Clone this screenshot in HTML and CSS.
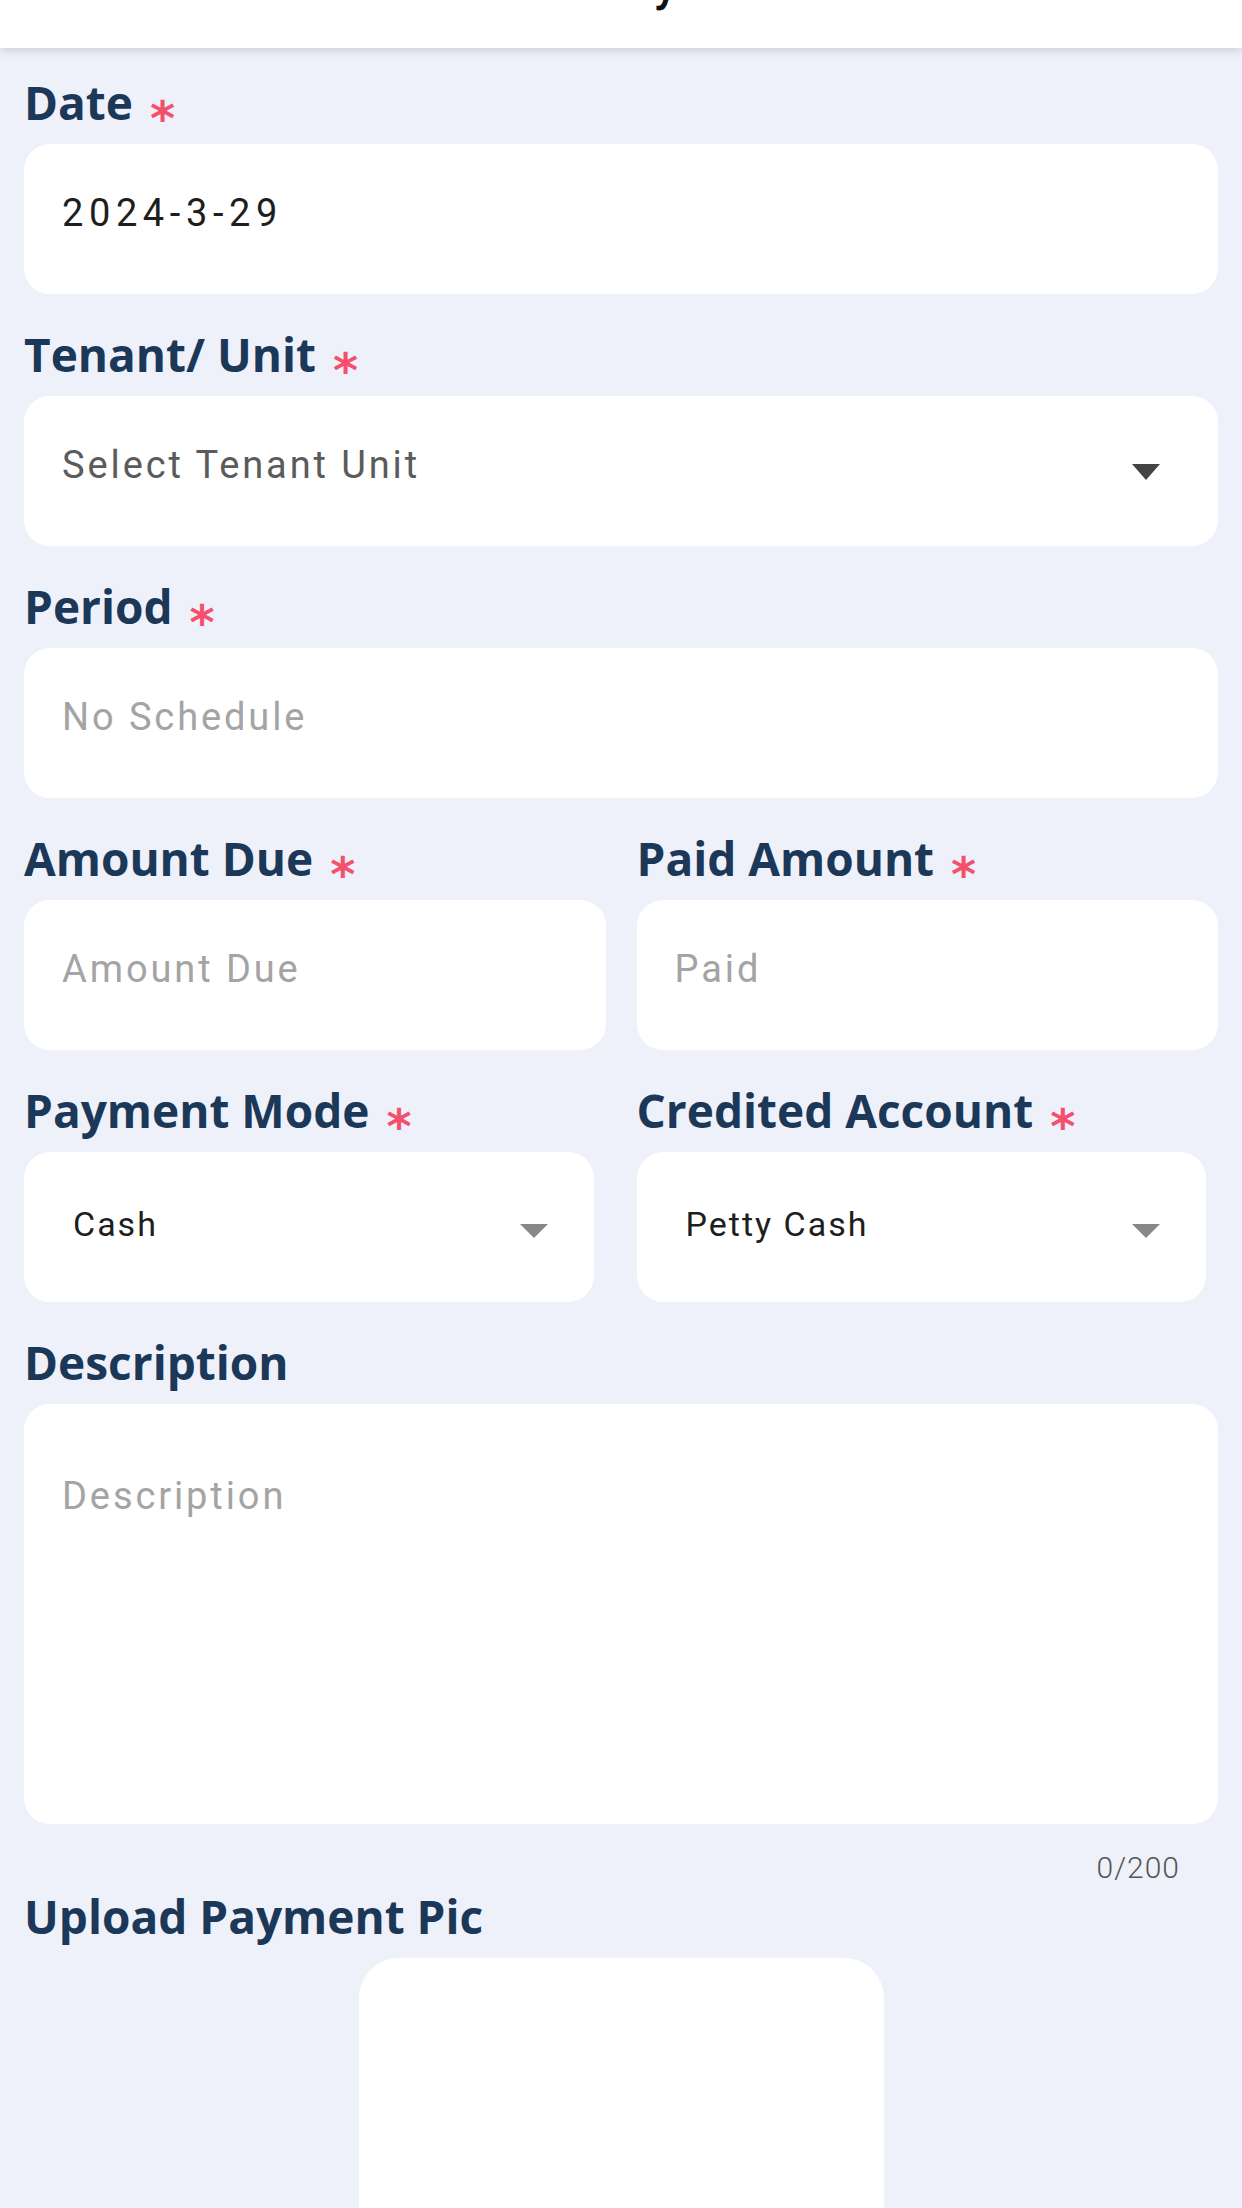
FILE: index.html
```html
<!DOCTYPE html>
<html lang="en">
  <head>
    <meta charset="UTF-8" />
    <meta name="viewport" content="width=device-width, initial-scale=1.0" />
    <title>Record Payment</title>
    <link rel="stylesheet" href="styles.css">
  </head>
  <body>
    <header class="top-bar">
      <h1 class="top-title">Record Payment</h1>
    </header>

    <form class="pay-form" id="pay-form">
      <div class="field">
        <label class="field-label" for="date">Date<span class="req">*</span></label>
        <input class="field-input date-input" id="date" type="text" value="2024-3-29" />
      </div>

      <div class="field">
        <label class="field-label">Tenant/ Unit<span class="req">*</span></label>
        <div class="picker picker-wide">
          <span class="picker-text muted">Select Tenant Unit</span>
          <svg class="caret dark" width="28" height="16" viewBox="0 0 28 16"><path d="M0 0h28L14 16z" /></svg>
        </div>
      </div>

      <div class="field">
        <label class="field-label" for="period">Period<span class="req">*</span></label>
        <input class="field-input" id="period" type="text" placeholder="No Schedule" />
      </div>

      <div class="field-row">
        <div class="field">
          <label class="field-label" for="due">Amount Due<span class="req">*</span></label>
          <input class="field-input" id="due" type="text" placeholder="Amount Due" />
        </div>
        <div class="field">
          <label class="field-label" for="paid">Paid Amount<span class="req">*</span></label>
          <input class="field-input" id="paid" type="text" placeholder="Paid" />
        </div>
      </div>

      <div class="field-row">
        <div class="field">
          <label class="field-label">Payment Mode<span class="req">*</span></label>
          <div class="picker picker-small">
            <span class="picker-text">Cash</span>
            <svg class="caret" width="28" height="14" viewBox="0 0 28 14"><path d="M0 0h28L14 14z" /></svg>
          </div>
        </div>
        <div class="field">
          <label class="field-label">Credited Account<span class="req">*</span></label>
          <div class="picker picker-small">
            <span class="picker-text">Petty Cash</span>
            <svg class="caret" width="28" height="14" viewBox="0 0 28 14"><path d="M0 0h28L14 14z" /></svg>
          </div>
        </div>
      </div>

      <div class="field">
        <label class="field-label" for="desc">Description</label>
        <textarea class="field-area" id="desc" maxlength="200" placeholder="Description"></textarea>
        <div class="counter" id="counter">0/200</div>
      </div>

      <div class="field upload-field">
        <label class="field-label">Upload Payment Pic</label>
        <div class="upload-box"></div>
      </div>
    </form>

    <script>
      const desc = document.getElementById("desc");
      const counter = document.getElementById("counter");

      desc.addEventListener("input", () => {
        counter.textContent = `${desc.value.length}/200`;
      });
    </script>
  </body>
</html>
```

FILE: styles.css
```css
body {
  margin: 0;
  background: #eef1fa;
  font-family: Roboto, "Liberation Sans", sans-serif;
  overflow: hidden;
}
.top-bar {
  height: 48px;
  background: #fff;
  display: flex;
  justify-content: center;
  align-items: flex-end;
  overflow: hidden;
  box-shadow: 0 3px 8px rgba(60, 64, 80, 0.18);
  position: relative;
  z-index: 1;
}
.top-title {
  margin: 0 20px 40px 0;
  font-size: 48px;
  line-height: 48px;
  font-weight: 500;
  color: #111;
}
.pay-form {
  padding: 28px 24px 0;
}
.field {
  display: flex;
  flex-direction: column;
  margin-bottom: 34px;
}
.field-label {
  height: 52px;
  font-family: "Open Sans", Roboto, sans-serif;
  font-size: 46px;
  line-height: 52px;
  font-weight: 700;
  color: #1c3858;
  margin-bottom: 16px;
  white-space: nowrap;
}
.req {
  display: inline-block;
  margin-left: 17px;
  font-family: "DejaVu Sans", sans-serif;
  font-size: 48px;
  line-height: 0;
  font-weight: 700;
  color: #f4506d;
  vertical-align: -15px;
}
.field-input,
.field-area {
  box-sizing: border-box;
  width: 100%;
  border: none;
  outline: none;
  border-radius: 26px;
  background: #fff;
  font-family: Roboto, "Liberation Sans", sans-serif;
  font-size: 38px;
  letter-spacing: 2.9px;
  color: #1e1e1e;
}
.field-input {
  height: 150px;
  padding: 0 38px 12px;
}
.date-input {
  letter-spacing: 5.6px;
}
.field-input::placeholder,
.field-area::placeholder {
  color: #a4a4a4;
}
.field-area {
  height: 420px;
  padding: 69px 38px;
  line-height: 46px;
  resize: none;
  display: block;
}
.picker {
  box-sizing: border-box;
  height: 150px;
  background: #fff;
  border-radius: 26px;
  display: flex;
  align-items: center;
  justify-content: space-between;
}
.picker-wide {
  padding: 0 58px 12px 38px;
}
.picker-small {
  margin-right: 12px;
  padding: 0 46px 6px 49px;
}
.picker-text {
  font-size: 34px;
  letter-spacing: 2px;
  color: #1e1e1e;
}
.picker-wide .picker-text {
  font-size: 38px;
  letter-spacing: 2.9px;
}
.picker-text.muted {
  color: #5b5b5b;
}
.caret {
  fill: #888;
  margin-top: 14px;
}
.caret.dark {
  fill: #444;
}
.field-row {
  display: grid;
  grid-template-columns: 1fr 1fr;
  column-gap: 31px;
}
.counter {
  margin-top: 26px;
  padding-right: 38px;
  text-align: right;
  font-size: 30px;
  line-height: 36px;
  font-weight: 300;
  letter-spacing: 1px;
  color: #555;
}
.upload-field {
  margin-top: -30px;
}
.upload-box {
  align-self: center;
  width: 525px;
  height: 525px;
  background: #fff;
  border-radius: 40px;
}
```
